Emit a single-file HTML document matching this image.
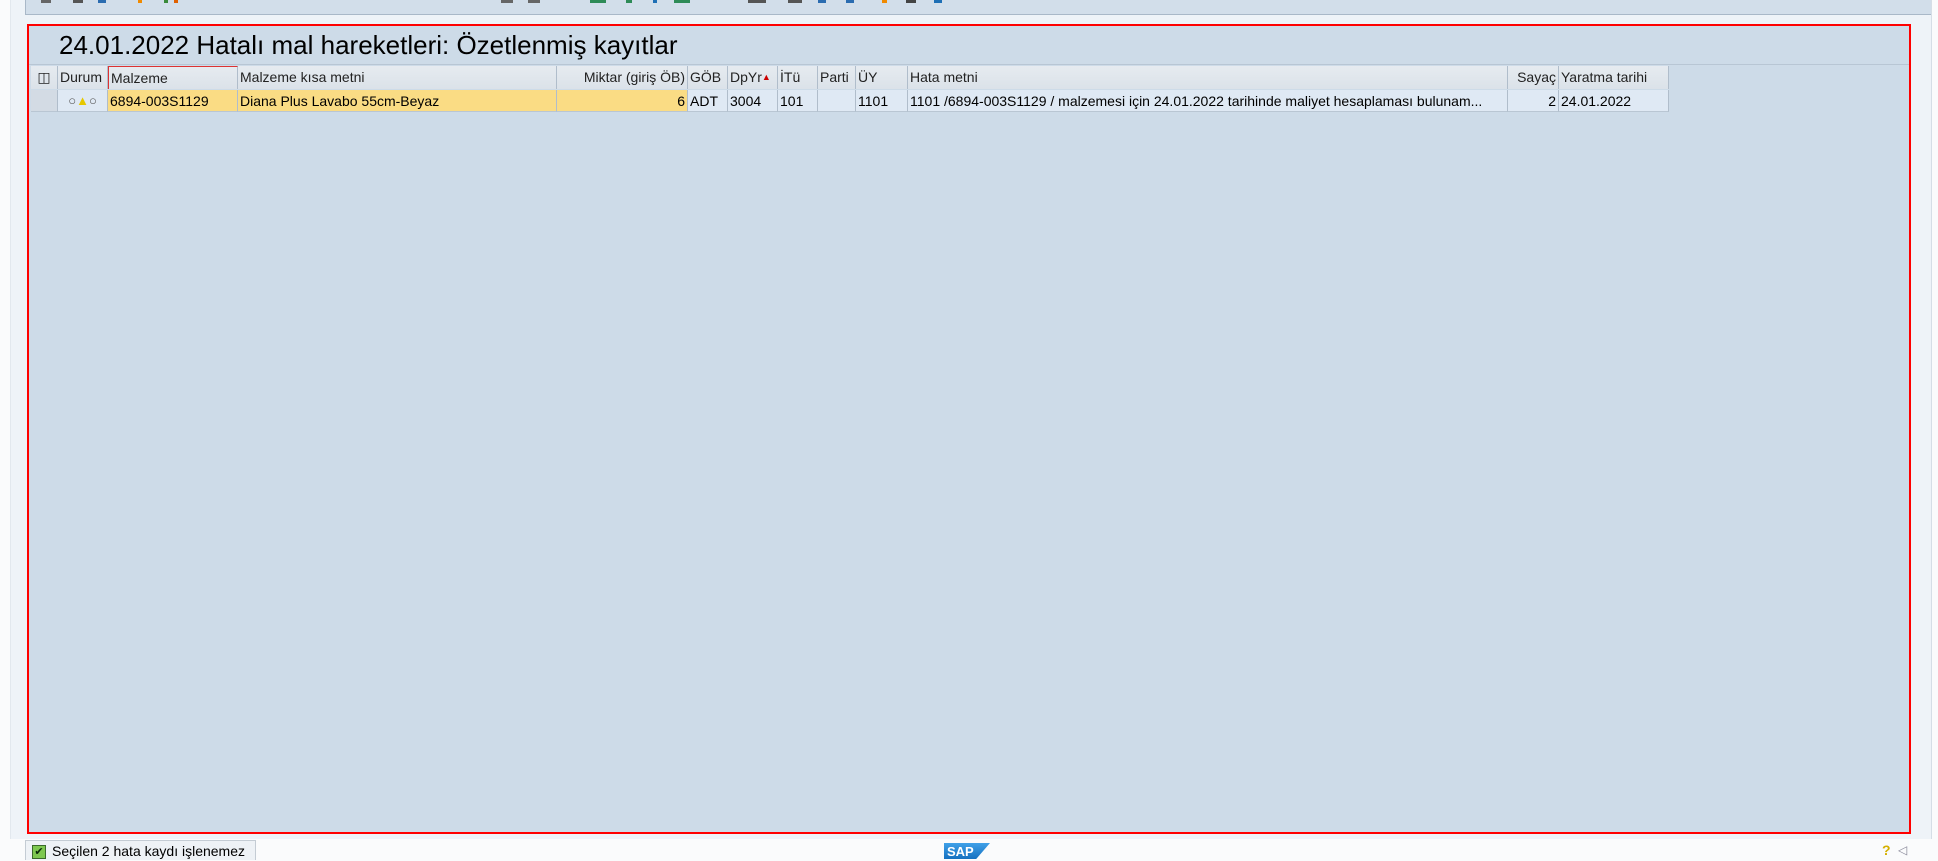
<!DOCTYPE html>
<html><head><meta charset="utf-8"><style>
body{margin:0;width:1938px;height:859px;background:#fafbfc;position:relative;overflow:hidden;font-family:"Liberation Sans",Tahoma,sans-serif;}
.tb{position:absolute;left:25px;top:0;width:1905px;height:14px;background:#d2deea;border-left:1px solid #a9b8c8;border-bottom:1px solid #a9b8c8;z-index:2}
.area{position:absolute;left:10px;top:0;width:1920px;height:839px;background:#eef3f8;border-left:1px solid #e2e8ee;border-right:1px solid #d6dee6;}
.frame{position:absolute;left:27px;top:24px;width:1880px;height:806px;border:2px solid #f00;background:#cddbe8;}
.title{position:absolute;left:59px;top:30px;font-size:26px;color:#000;}
.sep{position:absolute;left:29px;top:64px;width:1880px;height:1px;background:#b8c6d4;}
.row{position:absolute;left:31px;height:22px;display:flex;font-size:14px;}
.row div{box-sizing:border-box;height:100%;line-height:22px;padding:0 2px;white-space:nowrap;overflow:hidden;border-right:1px solid #b0bdcb;}
.h{top:66px;height:23px}
.h div{background:linear-gradient(#e6ebf0,#dbe2e9);color:#222;}
.d{top:90px;}
.d div{background:#dfe9f4;border-bottom:1px solid #b9c6d3;}
.d .y{background:#fadc84;}
.r{text-align:right}
.sb{position:absolute;left:25px;top:840px;width:229px;height:19px;border:1px solid #c4ccd4;border-bottom:none;background:#eef2f6;font-size:14px;line-height:20px;}
.ck{position:absolute;left:6px;top:4px;width:12px;height:12px;background:#7ec850;border:1px solid #3a6a2a;color:#0a2a0a;font-size:11px;line-height:12px;text-align:center;}
.ic{position:absolute;top:0;height:3px;}
</style></head><body>
<div class="area"></div>
<div class="tb">
<div class="ic" style="left:15px;width:10px;background:#666"></div>
<div class="ic" style="left:47px;width:10px;background:#555"></div>
<div class="ic" style="left:72px;width:8px;background:#2b6cb0"></div>
<div class="ic" style="left:112px;width:4px;background:#f08a00"></div>
<div class="ic" style="left:138px;width:4px;background:#3a8a3a"></div>
<div class="ic" style="left:148px;width:4px;background:#e06000"></div>
<div class="ic" style="left:475px;width:12px;background:#666"></div>
<div class="ic" style="left:502px;width:12px;background:#666"></div>
<div class="ic" style="left:564px;width:16px;background:#2e8b57"></div>
<div class="ic" style="left:600px;width:6px;background:#2e8b57"></div>
<div class="ic" style="left:627px;width:4px;background:#1e6fb5"></div>
<div class="ic" style="left:648px;width:16px;background:#2e8b57"></div>
<div class="ic" style="left:722px;width:18px;background:#555"></div>
<div class="ic" style="left:762px;width:14px;background:#555"></div>
<div class="ic" style="left:792px;width:8px;background:#2b6cb0"></div>
<div class="ic" style="left:820px;width:8px;background:#2b6cb0"></div>
<div class="ic" style="left:856px;width:5px;background:#f08a00"></div>
<div class="ic" style="left:880px;width:10px;background:#444"></div>
<div class="ic" style="left:908px;width:8px;background:#1e6fb5"></div>
</div>
<div class="frame"></div>
<div class="title">24.01.2022 Hatalı mal hareketleri: Özetlenmiş kayıtlar</div>
<div class="sep"></div>
<div class="row h">
<div style="width:27px;text-align:center">&#9707;</div>
<div style="width:50px">Durum</div>
<div style="width:130px;border-top:1px solid #d33;border-left:1px solid #d33">Malzeme</div>
<div style="width:319px">Malzeme kısa metni</div>
<div style="width:131px" class="r">Miktar (giriş ÖB)</div>
<div style="width:40px">GÖB</div>
<div style="width:50px">DpYr<span style="color:#c00;font-size:9px;vertical-align:top">▲</span></div>
<div style="width:40px">İTü</div>
<div style="width:38px">Parti</div>
<div style="width:52px">ÜY</div>
<div style="width:600px">Hata metni</div>
<div style="width:51px" class="r">Sayaç</div>
<div style="width:110px">Yaratma tarihi</div>
</div>
<div class="row d">
<div style="width:27px;background:#d3dbe4"></div>
<div style="width:50px;text-align:center;font-size:13px;color:#555">○<span style="color:#e6c800">▲</span>○</div>
<div style="width:130px" class="y">6894-003S1129</div>
<div style="width:319px" class="y">Diana Plus Lavabo 55cm-Beyaz</div>
<div style="width:131px" class="y r">6</div>
<div style="width:40px">ADT</div>
<div style="width:50px">3004</div>
<div style="width:40px">101</div>
<div style="width:38px"></div>
<div style="width:52px">1101</div>
<div style="width:600px">1101 /6894-003S1129 / malzemesi için 24.01.2022 tarihinde maliyet hesaplaması bulunam...</div>
<div style="width:51px" class="r">2</div>
<div style="width:110px">24.01.2022</div>
</div>
<div class="sb"><div class="ck">✔</div><span style="position:absolute;left:26px">Seçilen 2 hata kaydı işlenemez</span></div>
<div style="position:absolute;left:944px;top:843px;width:46px;height:16px;background:linear-gradient(#3fa0e8,#1570c0);clip-path:polygon(0 0,100% 0,70% 100%,0 100%);color:#fff;font-weight:bold;font-size:13px;line-height:18px;padding-left:3px;box-sizing:border-box">SAP</div>
<div style="position:absolute;left:1882px;top:842px;color:#d4b000;font-weight:bold;font-size:14px">?</div>
<div style="position:absolute;left:1898px;top:843px;color:#889;font-size:12px">◁</div>
</body></html>
